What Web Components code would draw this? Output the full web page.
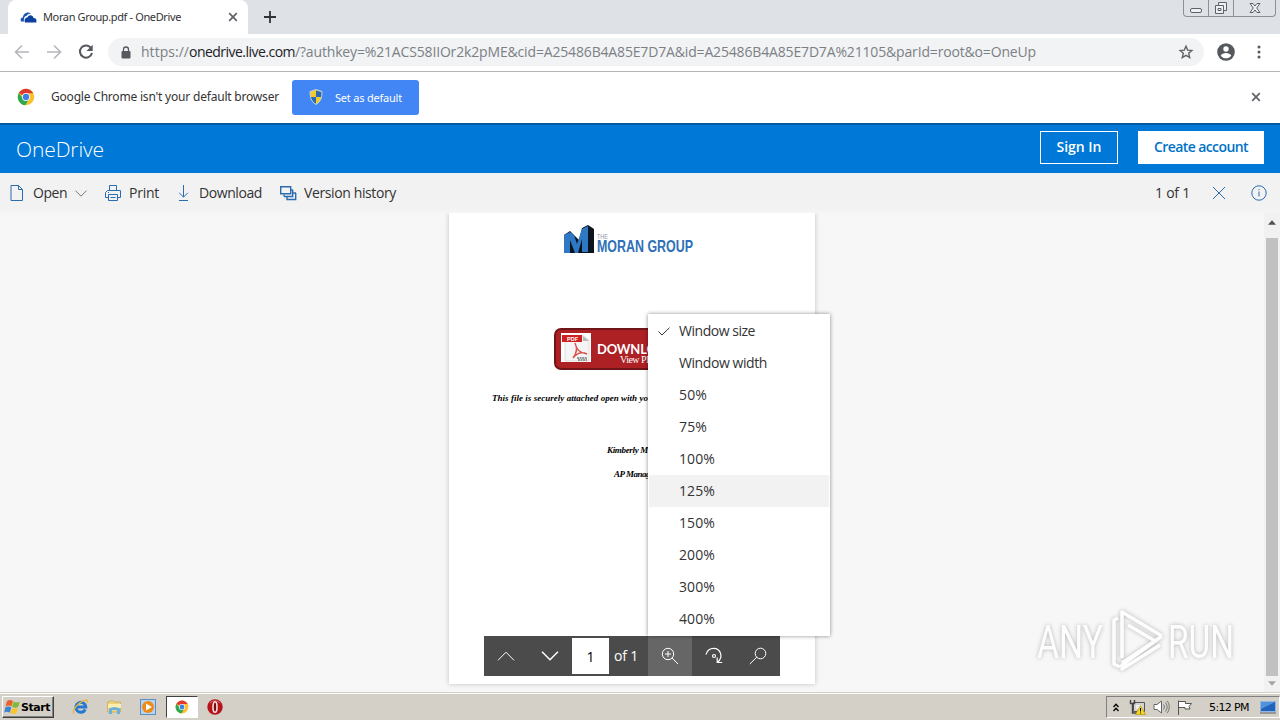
<!DOCTYPE html>
<html lang="en">
<head>
<meta charset="utf-8">
<title>Moran Group.pdf - OneDrive</title>
<style>
	body {
		margin: 0;
		width: 1280px;
		height: 720px;
		overflow: hidden;
		font-family: "Open Sans", "Noto Sans", sans-serif;
		color: #333;
	}
</style>
</head>
<body>
<desktop-screen></desktop-screen>

<script>
// every icon of the page, keyed by name: [viewBox, markup]
const chromeLogo = `
	<circle cx="12" cy="12" r="11" fill="#fbc02d"/>
	<path d="M12 12L2.5 6.500A11 11 0 0 1 21.500 6.500L21.500 7H12z" fill="#e03a2f"/>
	<path d="M2.500 6.500A11 11 0 0 0 11 23L16 14.500L12 12 8 14z" fill="#2da94f"/>
	<circle cx="12" cy="12" r="5.200" fill="#fff"/><circle cx="12" cy="12" r="4.200" fill="#3f7fe8"/>`;

const icons = {
	cloud: ['0 0 17 12', '<path d="M1 10.500C0 8 1 6.500 3 6.300 3 3 7 0 11 2.500 9 2.500 7 3.500 6.500 5 4.500 5 3.500 7 4 10.500z" fill="#1a56b4"/><path d="M5 11.500C4 9 5 6.500 7.500 6.500 8.500 3.500 13 3.500 13.500 7 16 7 17 9 16.300 11.500z" fill="#0b3fa0"/>'],
	tabClose: ['0 0 10 10', '<path d="M1.200 1.200l7.600 7.600M8.800 1.200L1.200 8.800" stroke="#5f6368" stroke-width="1.700"/>'],
	plus: ['0 0 12 12', '<path d="M6 0v12M0 6h12" stroke="#303236" stroke-width="1.800"/>'],
	back: ['0 0 16 16', '<path d="M15 8H2M8 1.500L1.500 8 8 14.500" fill="none" stroke="#b5b7ba" stroke-width="1.600"/>'],
	forward: ['0 0 16 16', '<path d="M1 8h13M8 1.500L14.500 8 8 14.500" fill="none" stroke="#b5b7ba" stroke-width="1.600"/>'],
	reload: ['0 0 16 16', '<path d="M13.200 4.200A6.100 6.100 0 1 0 14 9" fill="none" stroke="#55585c" stroke-width="2"/><path d="M14.700 .8v6.200H8.500z" fill="#55585c"/>'],
	lock: ['0 0 10 13', '<rect x=".5" y="5" width="9" height="7.500" rx="1" fill="#55585c"/><path d="M2.500 5.500V3.500a2.500 2.500 0 0 1 5 0v2" fill="none" stroke="#55585c" stroke-width="1.300"/>'],
	star: ['0 0 14 14', '<path d="M7 1.200l1.700 3.900 4.200.4-3.200 2.800 1 4.200L7 10.300l-3.700 2.200 1-4.200L1.100 5.500l4.200-.4z" fill="none" stroke="#5f6368" stroke-width="1.400"/>'],
	person: ['0 0 18 18', '<circle cx="9" cy="9" r="8.800" fill="#55585c"/><circle cx="9" cy="6" r="2.700" fill="#fff"/><path d="M3.700 12.800c1.500-3.700 9.100-3.700 10.600 0-2.600 3.400-8 3.400-10.600 0z" fill="#fff"/>'],
	dots: ['0 0 4 14', '<g fill="#55585c"><circle cx="2" cy="2" r="1.500"/><circle cx="2" cy="7" r="1.500"/><circle cx="2" cy="12" r="1.500"/></g>'],
	chrome: ['0 0 24 24', chromeLogo],
	shield: ['0 0 14 16', '<path d="M7 .5l6 2c0 6-1 10-6 13C2 12.500 1 8.500 1 2.500z" fill="#f3cb2d"/><path d="M7 1.500V8h5.300c.4-2 .5-3.500.4-5zM7 8H1.700c.6 3 2 5 5.300 6.800z" fill="#2b68b5"/><path d="M7 .5l6 2c0 6-1 10-6 13C2 12.500 1 8.500 1 2.500z" fill="none" stroke="#b9d0e8"/>'],
	file: ['0 0 14 16', '<path d="M1 .5h7.500l4 4v11H1zM8.500 .5v4h4" fill="none" stroke="#2b6cb0"/>'],
	chevron: ['0 0 12 7', '<path d="M.5 .7L6 6.200 11.500 .7" fill="none" stroke="#777"/>'],
	print: ['0 0 16 16', '<path d="M4.500 5.500v-5h7v5M3.500 12.500H.5v-5l2-2h13v7h-3M3.500 9.500h9v6h-9zM3 7.500h1M5.500 12.500h5" fill="none" stroke="#2b6cb0"/>'],
	download: ['0 0 11 16', '<path d="M5.500 0v12M1.200 7.800l4.300 4.300 4.300-4.300M1 15.500h9" fill="none" stroke="#2b6cb0"/>'],
	versions: ['0 0 17 15', '<g fill="none" stroke="#2b6cb0" stroke-width="1.400"><path d="M.7 .7h10v7H.7z"/><path d="M12.700 4v6.500H4M4 8.500v2M15.700 7v6.500H7v-2.500M11 4h2M13 7h3"/></g>'],
	thinClose: ['0 0 14 14', '<path d="M1 1l12 12M13 1L1 13" stroke="#2b6cb0"/>'],
	info: ['0 0 16 16', '<circle cx="8" cy="8" r="7.200" fill="none" stroke="#2b6cb0"/><path d="M8 6.500v5M8 4v1.200" stroke="#2b6cb0"/>'],
	check: ['0 0 12 9', '<path d="M.5 4.500L4 8 11.500 .7" fill="none" stroke="#333"/>'],
	up: ['0 0 18 10', '<path d="M1 9.300L9 1.200l8 8.100" fill="none" stroke="#fff"/>'],
	down: ['0 0 18 10', '<path d="M1 .7l8 8.100 8-8.100" fill="none" stroke="#fff" stroke-width="1.500"/>'],
	zoomIn: ['0 0 18 18', '<g fill="none" stroke="#fff"><circle cx="7" cy="7" r="5.700"/><path d="M11 11l6 6M7 4v6M4 7h6"/></g>'],
	rotate: ['0 0 18 18', '<g fill="none" stroke="#fff" stroke-width="1.200"><path d="M1 7.500C2 3.500 5 1.300 8.700 1.300c7 0 10 9 3.800 14M12.200 10.500v5h5"/><circle cx="9" cy="9" r="1.500"/></g>'],
	search: ['0 0 18 18', '<g fill="none" stroke="#fff"><circle cx="11.500" cy="6.500" r="5.300"/><path d="M7.700 10.300L.8 17"/></g>'],
	scrollUp: ['0 0 8 5', '<path d="M0 4.700L4 .3l4 4.400z" fill="#505050"/>'],
	scrollDown: ['0 0 8 5', '<path d="M0 .3L4 4.700 8 .3z" fill="#a3a3a3"/>'],
	winFlag: ['0 0 17 16', '<path d="M3 2q3-2 6 0L7.500 7.500q-3-2-6 0z" fill="#e8622c"/><path d="M9.700 2.400q3 2 6 0l-1.500 5.300q-3 2-6 0z" fill="#7fba35"/><path d="M1.300 8.400q3-2 6 0L5.800 13.700q-3-2-5.500 0z" fill="#3a83d6"/><path d="M8 8.700q3 2 6 0l-1.500 5.300q-3 2-6 0z" fill="#f8c62a"/>'],
	ie: ['0 0 18 16', '<path d="M13.300 10.500A5 5 0 1 1 13.800 8H5" fill="none" stroke="#2779cf" stroke-width="2.900"/><path d="M2 14.500C-1 13 6 3 13 1.300c3-.6 3 .8 2.300 2.500" fill="none" stroke="#e3b838" stroke-width="1.300"/>'],
	folder: ['0 0 17 16', '<path d="M1.500 3l5-1.500L8 3h6.500v10h-13z" fill="#edd37b" stroke="#c6a550" stroke-width=".7"/><path d="M2 5h13v4H2z" fill="#faedad"/><path d="M3 15V9.500q5.500-3 11 0V15h-3v-4H6v4z" fill="#69b1dc"/>'],
	media: ['0 0 16 16', '<rect x=".5" y=".5" width="15" height="15" fill="#b7d5f0" stroke="#5a8fc6"/><circle cx="8" cy="8" r="6" fill="#ee8b18"/><path d="M6 4.500v7l6-3.500z" fill="#fff"/>'],
	opera: ['0 0 16 16', '<circle cx="8" cy="8" r="7.700" fill="#b5141b"/><path d="M3 4a7 7 0 0 1 10 0" fill="none" stroke="#e2696c"/><ellipse cx="8" cy="8" rx="2" ry="5.300" fill="#7d0b10" stroke="#f7e3e3" stroke-width="1.600"/>'],
	trayUp: ['0 0 6 9', '<path d="M.5 4L3 1.300 5.500 4M.5 8L3 5.300 5.500 8" fill="none" stroke="#000" stroke-width="1.300"/>'],
	network: ['0 0 17 16', '<path d="M4.500 3.500h11v9h-11z" fill="#d3d3d3" stroke="#555"/><path d="M7 6h6v4H7z" fill="#eee"/><path d="M1.500 1v3.500h4V1M3.500 4.500V14h5" fill="none" stroke="#444" stroke-width="1.400"/><path d="M11.500 6.500L16.500 15.500h-10z" fill="#f8d71f" stroke="#a78b00" stroke-width=".6"/><path d="M11.500 9v3.500M11.500 13.500v1" stroke="#000"/>'],
	volume: ['0 0 17 14', '<path d="M1 4.500h3L8.500 1v12L4 9.500H1z" fill="#fff" stroke="#666"/><path d="M10.500 4.500q2 2.500 0 5M12.500 2.500q3.300 4.500 0 9M14.300 .8q4 6 0 12.400" fill="none" stroke="#777"/>'],
	flag: ['0 0 16 15', '<path d="M1.500 .5V15M1.500 1.500h7v2h6l-2.500 3 1 2.500H8V7.500H1.500z" fill="#fff" stroke="#555"/>'],
	desktop: ['0 0 16 13', '<path d="M.5 .5h15v10H.5z" fill="#2264bd" stroke="#8db5e2"/><path d="M1 1h14L1 8z" fill="#5392dc"/><path d="M0 12h16" stroke="#55606d"/>'],
	pdf: ['0 0 30 29', '<path d="M0 0h30v29H0z" fill="#fff"/><path d="M4 3h19l5 4v21H4z" fill="#f5f5f5" stroke="#ccc" stroke-width=".6"/><path d="M22 3v5h6z" fill="#b9b9b9"/><path d="M1 2h20v7H1z" fill="#cf1f20"/><text x="6" y="7.800" font-size="5.500" font-weight="700" font-family="Liberation Sans" fill="#fff">PDF</text><path d="M14 10c1 6 4 10 12 11-6-3-10-1-14 4 4-5 4-11 2-15z" fill="none" stroke="#d9534c" stroke-width="1.400"/><path d="M16 25h10M17 27h9" stroke="#777" stroke-width="1.500" stroke-dasharray="2 .6"/>'],
	moran: ['0 0 30 28', '<path d="M0 10L6 6 15 15 18 3 24 0 30 4V28H0z" fill="#0c1420"/><path d="M0 10L6 7l4 3 3 9 3-9 2-6 6-3v26h-6V14l-4 14h-3L6 15v13H0z" fill="#2f78c4"/>'],
	watermark: ['0 0 216 80', `
		<g fill="#fff" font-family="Roboto, sans-serif" font-size="47">
			<text x="7" y="58" textLength="66" lengthAdjust="spacingAndGlyphs">ANY</text>
			<text x="138" y="58" textLength="66" lengthAdjust="spacingAndGlyphs">RUN</text>
		</g>
		<g fill="none" stroke="#fff" stroke-width="3.500" stroke-linejoin="round"><path d="M88 18l-4 2v44l6 3M92 58V12l40 24M98 25l27 16-33 22M132 36l-40 29v4l38-24"/></g>`]
};

class GlyphIcon extends HTMLElement {
	connectedCallback() {
		const [box, markup] = icons[this.getAttribute('name')];
		const size = box.split(' ');
		const w = this.getAttribute('w') || size[2];
		const h = this.getAttribute('h') || size[3];
		this.attachShadow({ mode: 'open' });
		this.shadowRoot.innerHTML = `
<style>
	:host { display: block; flex: none; }
	svg { display: block; overflow: visible; }
</style>
<svg xmlns="http://www.w3.org/2000/svg" width="${w}" height="${h}" viewBox="${box}">${markup}</svg>`;
	}
}

// one line of text, tracked out or in to fill the given width
class TrackedText extends HTMLElement {
	connectedCallback() {
		this.attachShadow({ mode: 'open' });
		this.shadowRoot.innerHTML = `
<style>
	:host { display: block; flex: none; white-space: nowrap; }
	span { display: inline-block; }
</style>
<span><slot></slot></span>`;
		const span = this.shadowRoot.querySelector('span');
		const width = Number(this.getAttribute('w'));
		const gap = (width - span.getBoundingClientRect().width) / this.textContent.length;
		span.style.letterSpacing = gap.toFixed(3) + 'px';
		this.style.width = width + 'px';
	}
}

function define(name, html) {
	const template = document.createElement('template');
	template.innerHTML = html;
	customElements.define(name, class extends HTMLElement {
		connectedCallback() {
			this.attachShadow({ mode: 'open' });
			this.shadowRoot.append(template.content.cloneNode(true));
		}
	});
}

define('desktop-screen', `
<style>
	:host { display: flex; flex-direction: column; width: 1280px; height: 720px; background: #fff; }
</style>
<tab-strip></tab-strip>
<address-bar></address-bar>
<info-bar></info-bar>
<drive-header></drive-header>
<command-bar></command-bar>
<pdf-viewer></pdf-viewer>
<task-bar></task-bar>
`);

define('tab-strip', `
<style>
	:host { display: flex; height: 34px; background: #dee1e6; font: 11px "Noto Sans", sans-serif; color: #333; flex: none; }
	.tab { display: flex; align-items: center; width: 240px; height: 34px; margin-left: 8px; box-sizing: border-box; padding: 0 0 1px 12px; background: #fff; border-radius: 8px 8px 0 0; }
	.tab tracked-text { margin-left: 6px; }
	.tab .close { margin-left: 47px; }
	.plus { margin: 11px 0 0 16px; }
	.buttons { display: flex; margin: 0 4px 0 auto; width: 93px; height: 17px; box-sizing: border-box; border: 1px solid #8c9097; border-top: 0; border-radius: 0 0 4px 4px; }
	.buttons svg { display: block; }
</style>
<div class="tab">
	<glyph-icon name="cloud"></glyph-icon>
	<tracked-text w="138">Moran Group.pdf - OneDrive</tracked-text>
	<glyph-icon class="close" name="tabClose"></glyph-icon>
</div>
<glyph-icon class="plus" name="plus"></glyph-icon>
<div class="buttons">
	<svg width="91" height="16" fill="#eef0f3" stroke="#5e6269">
		<path d="M24.500 0v16M49.500 0v16" stroke="#8c9097"/>
		<rect x="6.500" y="8.500" width="11" height="4" rx="1.500"/>
		<path d="M34.500 2.500h8v8h-8z"/><path d="M31.500 5.500h8v8h-8zM34 8.500h3v2h-3z"/>
		<path d="M66 3.500h3l2 2.500 2-2.500h3L72.700 8l3.300 4.500h-3L71 10l-2 2.500h-3L69.300 8z"/>
	</svg>
</div>
`);

define('address-bar', `
<style>
	:host { display: flex; align-items: center; box-sizing: border-box; height: 38px; padding: 0 19px 1px 14px; border-bottom: 1px solid #b3b5b7; flex: none; }
	.nav { display: flex; gap: 16px; }
	.url { display: flex; align-items: center; box-sizing: border-box; width: 1096px; height: 28px; margin-left: 14px; padding: 0 11px 0 13px; border-radius: 14px; background: #f1f3f4; color: #7c8085; font-size: 14px; }
	.url .lock { margin-right: 10px; }
	.url tracked-text { margin-top: -2px; }
	b { color: #202124; font-weight: 400; }
	.star { margin-left: auto; }
	.person { margin-left: 13px; }
	.dots { margin-left: 22px; }
</style>
<div class="nav">
	<glyph-icon name="back"></glyph-icon>
	<glyph-icon name="forward"></glyph-icon>
	<glyph-icon name="reload"></glyph-icon>
</div>
<div class="url">
	<glyph-icon class="lock" name="lock"></glyph-icon>
	<tracked-text w="48">https://</tracked-text>
	<tracked-text w="106"><b>onedrive.live.com</b></tracked-text>
	<tracked-text w="741">/?authkey=%21ACS58IIOr2k2pME&amp;cid=A25486B4A85E7D7A&amp;id=A25486B4A85E7D7A%21105&amp;parId=root&amp;o=OneUp</tracked-text>
	<glyph-icon class="star" name="star"></glyph-icon>
</div>
<glyph-icon class="person" name="person"></glyph-icon>
<glyph-icon class="dots" name="dots"></glyph-icon>
`);

define('info-bar', `
<style>
	:host { display: flex; align-items: center; height: 51px; padding: 0 19px 0 17px; flex: none; font: 12px "Noto Sans", sans-serif; }
	.logo { margin-top: -2px; }
	.text { margin: -2px 0 0 16px; }
	.button { display: flex; align-items: center; box-sizing: border-box; width: 127px; height: 35px; margin-left: 13px; padding: 0 0 1px 17px; gap: 12px; border-radius: 3px; background: #4285f4; color: #fff; font-size: 11px; }
	.close { margin: -2px 0 0 auto; }
</style>
<glyph-icon class="logo" name="chrome" w="18" h="18"></glyph-icon>
<tracked-text class="text" w="228">Google Chrome isn't your default browser</tracked-text>
<div class="button">
	<glyph-icon name="shield"></glyph-icon>
	<tracked-text w="67">Set as default</tracked-text>
</div>
<glyph-icon class="close" name="tabClose"></glyph-icon>
`);

define('drive-header', `
<style>
	:host { display: flex; align-items: center; box-sizing: border-box; height: 50px; padding: 0 16px; border-top: 2px solid #005a9e; background: #0078d7; color: #fff; flex: none; }
	.brand { margin: 0 auto 0 0; font-size: 21px; font-weight: 300; }
	.button { display: flex; align-items: center; justify-content: center; box-sizing: border-box; height: 33px; margin-top: -4px; padding-bottom: 1px; border: 1px solid #fff; font: 600 14px "Open Sans", sans-serif; }
	.signin { width: 78px; }
	.create { width: 126px; margin-left: 20px; background: #fff; color: #0072c6; }
</style>
<tracked-text class="brand" w="88">OneDrive</tracked-text>
<div class="button signin"><tracked-text w="45">Sign In</tracked-text></div>
<div class="button create"><tracked-text w="94">Create account</tracked-text></div>
`);

define('command-bar', `
<style>
	:host { display: flex; align-items: center; height: 40px; padding: 0 13px 0 10px; background: linear-gradient(#f2f2f2 85%, #f5f5f5); font-size: 14px; flex: none; }
	tracked-text { margin-top: -1px; }
	command-item + command-item { margin-left: 17px; }
	.count { margin-left: auto; }
	.close { margin-left: 22px; }
	.info { margin-left: 25px; }
</style>
<command-item><glyph-icon slot="icon" name="file"></glyph-icon><tracked-text w="34" style="margin-left: 1px">Open</tracked-text><glyph-icon name="chevron"></glyph-icon></command-item>
<command-item style="margin-left: 18px"><glyph-icon slot="icon" name="print"></glyph-icon><tracked-text w="30">Print</tracked-text></command-item>
<command-item><glyph-icon slot="icon" name="download" style="margin: 0 2px"></glyph-icon><tracked-text w="63">Download</tracked-text></command-item>
<command-item style="margin-left: 18px"><glyph-icon slot="icon" name="versions"></glyph-icon><tracked-text w="92" style="margin-left: -1px">Version history</tracked-text></command-item>
<tracked-text class="count" w="35">1 of 1</tracked-text>
<glyph-icon class="close" name="thinClose"></glyph-icon>
<glyph-icon class="info" name="info"></glyph-icon>
`);

define('command-item', `
<style>
	:host { display: flex; align-items: center; gap: 8px; }
</style>
<slot name="icon"></slot>
<slot></slot>
`);

define('pdf-viewer', `
<style>
	:host { display: flex; position: relative; height: 479px; background: #f7f7f7; flex: none; overflow: hidden; }
	pdf-page { margin-left: 449px; }
	scroll-bar { margin-left: auto; }
	page-controls { position: absolute; left: 484px; top: 423px; }
	zoom-menu { position: absolute; left: 648px; top: 101px; }
	.mark { position: absolute; left: 1030px; top: 387px; opacity: .85; filter: drop-shadow(0 0 2px #a8a8a8); }
</style>
<pdf-page></pdf-page>
<scroll-bar></scroll-bar>
<page-controls></page-controls>
<zoom-menu>
	<menu-row checked><tracked-text w="76">Window size</tracked-text></menu-row>
	<menu-row><tracked-text w="88">Window width</tracked-text></menu-row>
	<menu-row><tracked-text w="28">50%</tracked-text></menu-row>
	<menu-row><tracked-text w="28">75%</tracked-text></menu-row>
	<menu-row><tracked-text w="36">100%</tracked-text></menu-row>
	<menu-row active><tracked-text w="36">125%</tracked-text></menu-row>
	<menu-row><tracked-text w="36">150%</tracked-text></menu-row>
	<menu-row><tracked-text w="36">200%</tracked-text></menu-row>
	<menu-row><tracked-text w="36">300%</tracked-text></menu-row>
	<menu-row><tracked-text w="36">400%</tracked-text></menu-row>
</zoom-menu>
<glyph-icon class="mark" name="watermark"></glyph-icon>
`);

define('pdf-page', `
<style>
	:host { display: block; width: 366px; height: 471px; background: #fff; box-shadow: 0 0 5px rgba(0, 0, 0, .22); color: #000; font-family: "Liberation Serif", serif; }
	.logo { display: flex; padding: 12px 0 0 115px; gap: 3px; height: 28px; }
	.name svg { display: block; overflow: visible; }
	.download { display: flex; align-items: center; box-sizing: border-box; width: 160px; height: 42px; margin: 75px 0 0 105px; padding: 0 0 3px 5px; gap: 6px; border: 2px solid #6f1417; border-radius: 7px; background: #ad2024; color: #fff; }
	.label { position: relative; font: 700 13px/16px Lato, sans-serif; padding-top: 2px; }
	.label div { position: absolute; left: 23px; top: 15px; font: 10px/12px "Liberation Serif", serif; }
	.line { height: 12px; font: italic bold 9px/12px "Liberation Serif", serif; }
</style>
<div class="logo">
	<glyph-icon name="moran"></glyph-icon>
	<div class="name">
		<svg width="102" height="32" fill="#2e71b8" font-family="Liberation Sans">
			<text x="0" y="14" font-size="8" fill="#8b98a8" textLength="11" lengthAdjust="spacingAndGlyphs">THE</text>
			<text x="0" y="26.800" font-size="16.500" font-weight="700" textLength="96" lengthAdjust="spacingAndGlyphs">MORAN GROUP</text>
		</svg>
	</div>
</div>
<div class="download">
	<glyph-icon name="pdf"></glyph-icon>
	<div class="label"><tracked-text w="78">DOWNLOAD</tracked-text><div><tracked-text w="38">View PDF</tracked-text></div></div>
</div>
<div class="line" style="padding: 22px 0 0 43px"><tracked-text w="156">This file is securely attached open with yo</tracked-text></div>
<div class="line" style="padding: 40px 0 0 158px"><tracked-text w="41">Kimberly M</tracked-text></div>
<div class="line" style="padding: 12px 0 0 165px"><tracked-text w="36">AP Manag</tracked-text></div>
`);

define('scroll-bar', `
<style>
	:host { display: flex; flex-direction: column; align-items: center; box-sizing: border-box; width: 16px; height: 479px; padding: 7px 0 6px; background: #f1f1f1; }
	.thumb { width: 12px; height: 438px; margin: 13px 0 auto; background: #c1c1c1; }
</style>
<glyph-icon name="scrollUp"></glyph-icon>
<div class="thumb"></div>
<glyph-icon name="scrollDown"></glyph-icon>
`);

define('page-controls', `
<style>
	:host { display: flex; width: 296px; height: 40px; background: #4b4b4b; color: #fff; font-size: 14px; }
	.cell { display: flex; align-items: center; justify-content: center; width: 44px; }
	.on { background: #666; }
	.input { display: flex; align-items: center; justify-content: center; width: 37px; height: 36px; margin: 2px 1px 0 0; background: #fff; color: #000; }
	.of { margin: 10px 10px 0 4px; line-height: 20px; }
</style>
<div class="cell"><glyph-icon name="up"></glyph-icon></div>
<div class="cell"><glyph-icon name="down"></glyph-icon></div>
<div class="input">1</div>
<tracked-text class="of" w="24">of 1</tracked-text>
<div class="cell on"><glyph-icon name="zoomIn"></glyph-icon></div>
<div class="cell"><glyph-icon name="rotate"></glyph-icon></div>
<div class="cell"><glyph-icon name="search"></glyph-icon></div>
`);

define('zoom-menu', `
<style>
	:host { display: block; box-sizing: border-box; width: 182px; height: 322px; padding: 1px; background: #fff; box-shadow: 0 0 4px rgba(0, 0, 0, .45); }
</style>
<slot></slot>
`);

define('menu-row', `
<style>
	:host { display: flex; align-items: center; box-sizing: border-box; height: 32px; padding-bottom: 2px; font-size: 14px; color: #333; }
	:host([active]) { background: #f2f2f2; }
	.tick { width: 12px; margin: 2px 9px 0; visibility: hidden; }
	:host([checked]) .tick { visibility: visible; }
</style>
<div class="tick"><glyph-icon name="check"></glyph-icon></div>
<slot></slot>
`);

define('task-bar', `
<style>
	:host { display: flex; box-sizing: border-box; height: 28px; padding-top: 3px; border-top: 1px solid #d4d0c8; background: #d4d0c8; box-shadow: inset 0 1px #fff; flex: none; color: #000; font: 11px "DejaVu Sans", sans-serif; }
	.start { display: flex; align-items: center; box-sizing: border-box; width: 52px; height: 22px; margin-left: 2px; padding-left: 1px; border: 1px solid; border-color: #fff #404040 #404040 #fff; box-shadow: inset -1px -1px #808080; font-weight: 700; }
	.apps { display: flex; align-items: center; height: 22px; margin-left: 10px; }
	.cell { display: flex; align-items: center; justify-content: center; width: 33.500px; height: 22px; }
	.on { box-sizing: border-box; width: 32px; border: 1px solid; border-color: #404040 #fff #fff #404040; background: #fff; margin: 0 1px; }
	.tray { display: flex; align-items: center; box-sizing: border-box; width: 174px; height: 22px; margin-left: auto; padding-left: 6px; border: 1px solid; border-color: #808080 #fff #fff #808080; }
</style>
<div class="start"><glyph-icon name="winFlag"></glyph-icon><tracked-text w="29">Start</tracked-text></div>
<div class="apps">
	<div class="cell"><glyph-icon name="ie"></glyph-icon></div>
	<div class="cell"><glyph-icon name="folder"></glyph-icon></div>
	<div class="cell"><glyph-icon name="media"></glyph-icon></div>
	<div class="cell on"><glyph-icon name="chrome" w="14" h="14"></glyph-icon></div>
	<div class="cell"><glyph-icon name="opera"></glyph-icon></div>
</div>
<div class="tray">
	<glyph-icon name="trayUp"></glyph-icon>
	<glyph-icon name="network" style="margin-left: 10px"></glyph-icon>
	<glyph-icon name="volume" style="margin-left: 7px"></glyph-icon>
	<glyph-icon name="flag" style="margin-left: 7px"></glyph-icon>
	<tracked-text w="40" style="margin-left: 16px">5:12 PM</tracked-text>
	<glyph-icon name="desktop" style="margin-left: 11px"></glyph-icon>
</div>
`);

customElements.define('glyph-icon', GlyphIcon);
customElements.define('tracked-text', TrackedText);
</script>
</body>
</html>
